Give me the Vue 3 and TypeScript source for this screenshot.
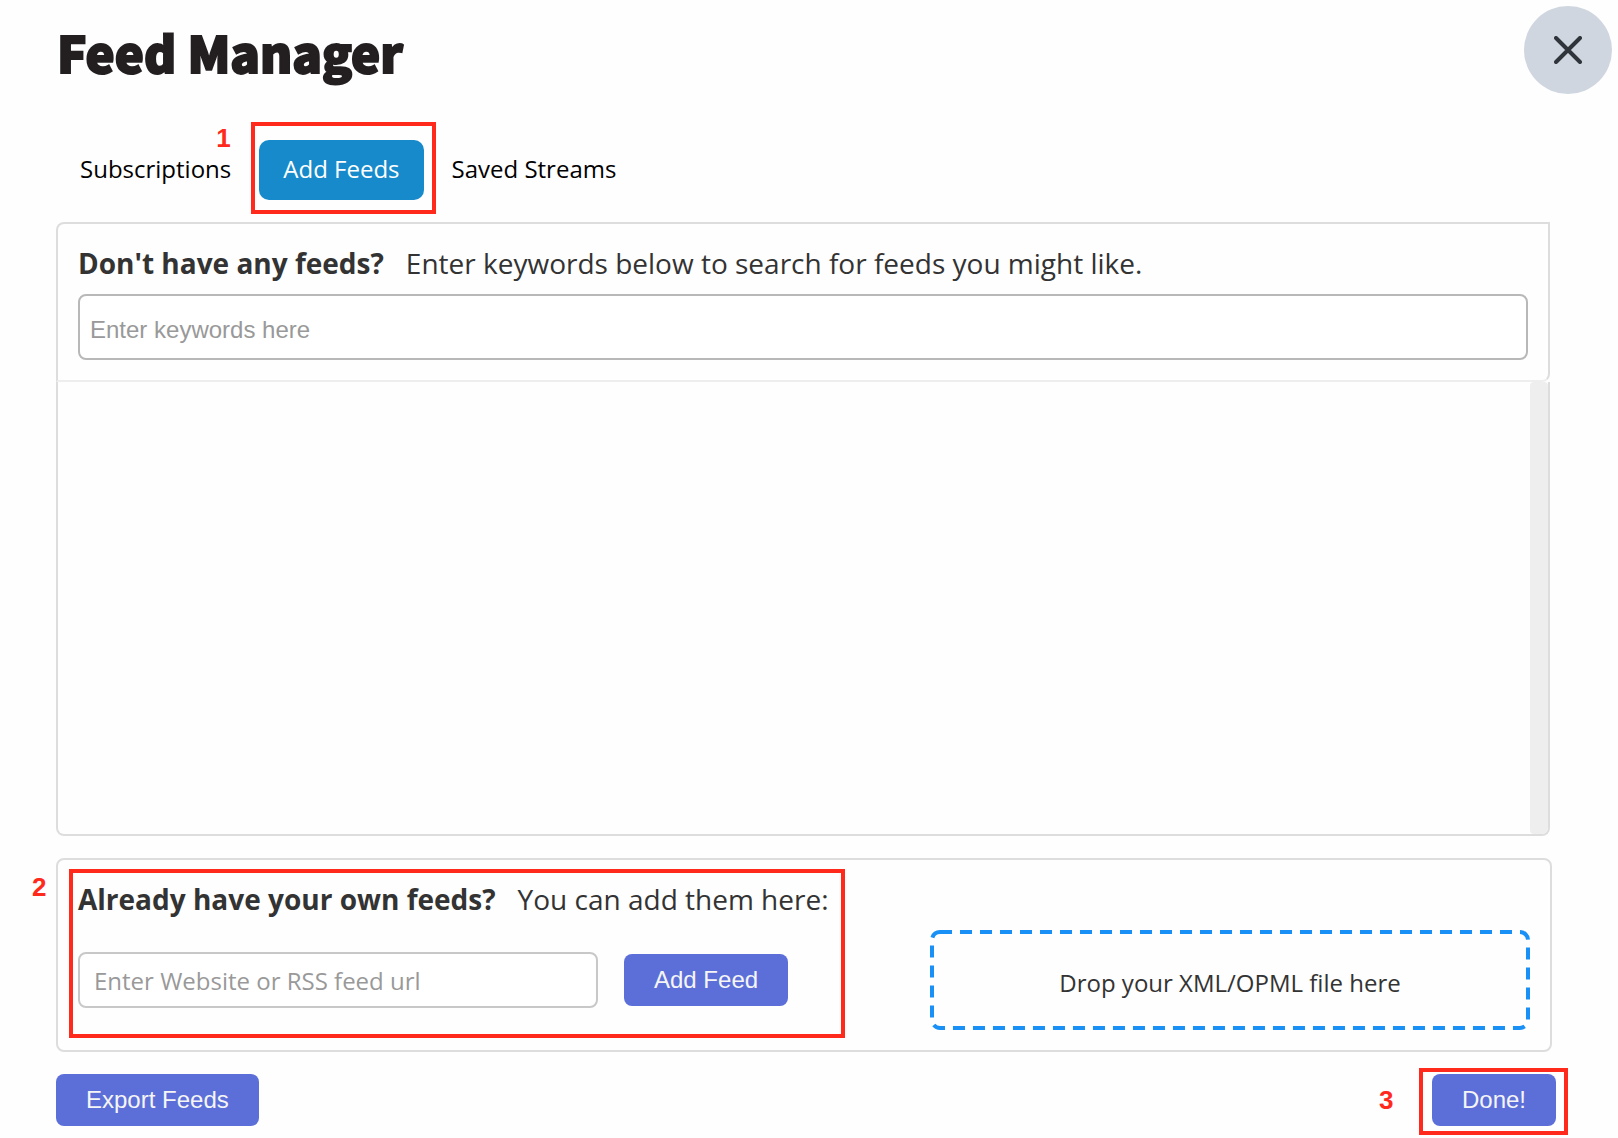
<script setup lang="ts">
import { ref } from 'vue'

const tabs = ['Subscriptions', 'Add Feeds', 'Saved Streams']
const active = ref('Add Feeds')
const keywords = ref('')
const feedUrl = ref('')
</script>

<template>
  <main class="page">
    <header class="header">
      <h1>Feed Manager</h1>
      <button class="close" type="button" aria-label="Close">
        <svg viewBox="0 0 28 28" width="28" height="28" aria-hidden="true">
          <path d="M2 2 L26 26 M26 2 L2 26" fill="none" stroke="#2f353b" stroke-width="4" stroke-linecap="round" />
        </svg>
      </button>
    </header>

    <div class="content">
      <nav class="tabs">
        <div v-for="tab in tabs" :key="tab" class="tab-slot">
          <button class="tab" :class="{ active: tab === active }" type="button" @click="active = tab">{{ tab }}</button>
          <template v-if="tab === 'Add Feeds'">
            <span class="mark mark-tab"></span>
            <span class="step step-tab">1</span>
          </template>
        </div>
      </nav>

      <section class="search">
        <label class="prompt" for="keywords"><strong>Don't have any feeds?</strong><span>Enter keywords below to search for feeds you might like.</span></label>
        <input id="keywords" v-model="keywords" class="keywords" type="text" placeholder="Enter keywords here" />
      </section>
      <section class="results" aria-label="Results">
        <div class="track"></div>
      </section>

      <section class="own">
        <div class="own-form">
          <label class="prompt" for="feed-url"><strong>Already have your own feeds?</strong><span>You can add them here:</span></label>
          <div class="url-row">
            <input id="feed-url" v-model="feedUrl" class="url" type="text" placeholder="Enter Website or RSS feed url" />
            <button class="action" type="button">Add Feed</button>
          </div>
          <span class="mark mark-form"></span>
          <span class="step step-form">2</span>
        </div>
        <div class="drop">
          <svg class="outline" aria-hidden="true">
            <rect width="100%" height="100%" rx="8" fill="none" stroke="#1890f5" stroke-width="4" stroke-dasharray="12 8" />
          </svg>
          Drop your XML/OPML file here
        </div>
      </section>

      <footer class="footer">
        <button class="action" type="button">Export Feeds</button>
        <div class="done">
          <button class="action" type="button">Done!</button>
          <span class="mark mark-done"></span>
          <span class="step step-done">3</span>
        </div>
      </footer>
    </div>
  </main>
</template>

<style>
body {
  background: #fefefe;
}
</style>

<style scoped>
* {
  box-sizing: border-box;
}
.page {
  display: flex;
  flex-direction: column;
  min-height: 100vh;
  padding-bottom: 12px;
  font-family: 'Open Sans', 'Noto Sans', sans-serif;
  font-size: 24px;
  color: #333;
}
.header {
  display: flex;
  align-items: center;
  justify-content: space-between;
  padding: 6px 6px 0 56px;
}
h1 {
  margin: 0;
  padding: 4px 0 0 1px;
  font-family: 'Noto Sans CJK SC', 'Open Sans', sans-serif;
  font-size: 49px;
  line-height: 72px;
  font-weight: 900;
  color: #231f20;
  -webkit-text-stroke: 2px #231f20;
}
.close {
  display: flex;
  align-items: center;
  justify-content: center;
  width: 88px;
  height: 88px;
  padding: 0;
  border: 0;
  border-radius: 50%;
  background: #cfd6df;
}
.content {
  flex: 1;
  display: flex;
  flex-direction: column;
  padding: 46px 62px 0 56px;
}
.tabs {
  display: flex;
  gap: 4px;
  margin-bottom: 22px;
}
.tab-slot,
.done,
.own-form {
  position: relative;
}
.tab {
  height: 60px;
  padding: 0 24px 4px;
  border: 0;
  border-radius: 10px;
  background: transparent;
  font: inherit;
  color: #000;
}
.tab.active {
  background: #168acb;
  color: #fff;
}
.search {
  margin-right: 6px;
  padding: 20px;
  border: 2px solid #ddd;
  border-bottom-color: #eee;
  border-radius: 8px 0 8px 0;
}
.prompt {
  display: flex;
  gap: 22px;
  font-size: 28px;
  line-height: 38px;
}
.keywords {
  display: block;
  width: 100%;
  height: 66px;
  margin-top: 12px;
  padding: 6px 10px 0;
  border: 2px solid #b8b8b8;
  border-radius: 8px;
  background: #fff;
  font: 24px 'Liberation Sans', Arial, sans-serif;
}
input::placeholder {
  color: #999;
  opacity: 1;
}
.results {
  flex: 1;
  display: flex;
  justify-content: flex-end;
  min-height: 200px;
  margin-right: 6px;
  border: 2px solid #ddd;
  border-top: 0;
  border-radius: 0 0 8px 8px;
}
.track {
  width: 18px;
  border-radius: 4px 4px 6px 4px;
  background: #eee;
}
.own {
  display: flex;
  justify-content: space-between;
  align-items: flex-end;
  margin: 22px 4px 22px 0;
  padding: 20px;
  border: 2px solid #ddd;
  border-radius: 8px;
}
.own-form {
  padding-bottom: 22px;
}
.url-row {
  display: flex;
  align-items: center;
  gap: 26px;
  margin-top: 34px;
}
.url {
  width: 520px;
  height: 56px;
  padding: 0 14px;
  border: 2px solid #c8c8c8;
  border-radius: 8px;
  background: #fff;
  font: inherit;
}
.action {
  height: 52px;
  padding: 0 30px;
  border: 0;
  border-radius: 8px;
  background: #5c6fd9;
  font: 24px 'Liberation Sans', Arial, sans-serif;
  color: #f5f5f5;
}
.drop {
  position: relative;
  display: flex;
  align-items: center;
  justify-content: center;
  flex: 0 1 600px;
  height: 100px;
  padding-top: 4px;
}
.outline {
  position: absolute;
  top: 2px;
  left: 2px;
  width: calc(100% - 4px);
  height: calc(100% - 4px);
  overflow: visible;
}
.footer {
  display: flex;
  justify-content: space-between;
}

/* Tutorial markers */
.mark {
  position: absolute;
  border: 4px solid #ff2a1c;
  pointer-events: none;
}
.mark-tab {
  inset: -18px -12px -14px -8px;
}
.mark-form {
  inset: -11px -16px -8px -9px;
}
.mark-done {
  inset: -6px -12px -9px -13px;
}
.step {
  position: absolute;
  font: bold 26px/30px 'Liberation Sans', Arial, sans-serif;
  color: #ff2a1c;
}
.step-tab {
  top: -17px;
  left: -43px;
}
.step-form {
  top: -8px;
  left: -46px;
}
.step-done {
  top: 11px;
  left: -53px;
}
</style>
